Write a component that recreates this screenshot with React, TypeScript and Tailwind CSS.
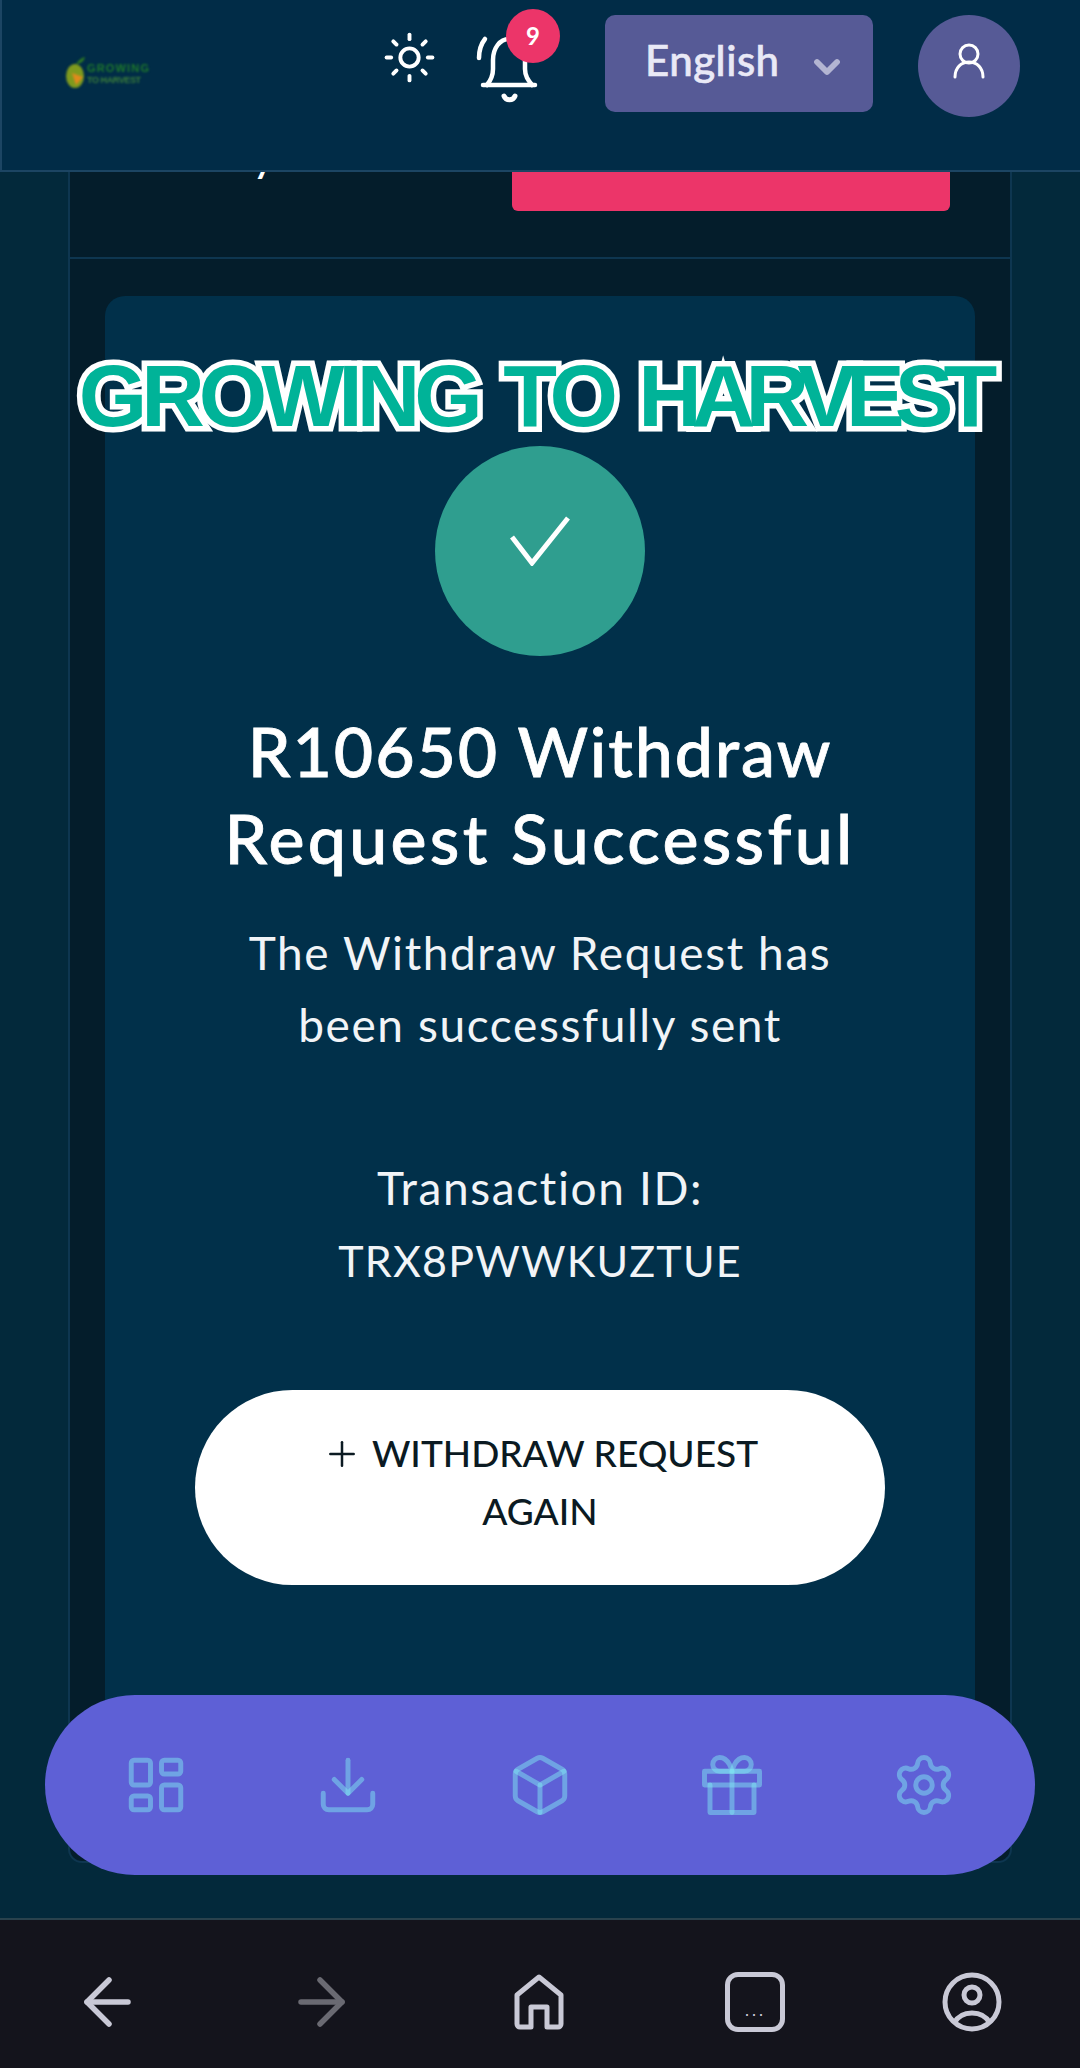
import React from 'react';
import { Sun, ChevronDown, Plus, LayoutDashboard, Download, Box, Settings } from 'lucide-react';

const font = "font-['Lato','Open_Sans',sans-serif]";

const GiftIcon = ({ size, strokeWidth, stroke, strokeOpacity }: { size: number; strokeWidth: number; stroke: string; strokeOpacity: number }) => (
  <svg viewBox="0 0 24 24" width={size} height={size} fill="none" stroke={stroke} strokeWidth={strokeWidth} strokeOpacity={strokeOpacity} strokeLinecap="round" strokeLinejoin="round">
    <path d="M20 12v10H4V12" />
    <rect x="2" y="7" width="20" height="5" />
    <path d="M12 22V7" />
    <path d="M12 7H7.5a2.5 2.5 0 0 1 0-5C11 2 12 7 12 7z" />
    <path d="M12 7h4.5a2.5 2.5 0 0 0 0-5C13 2 12 7 12 7z" />
  </svg>
);

const navIcons = [LayoutDashboard, Download, Box, GiftIcon, Settings];

const BellIcon = () => (
  <svg viewBox="0 0 70 70" className="w-[70px] h-[70px]" fill="none" stroke="white" strokeWidth="4.5" strokeLinecap="round" strokeLinejoin="round">
    <path d="M10 4C6 9 4 15 4 23" />
    <path d="M12 50c4-5 6-9 6-16v-9c0-12 7-21 16-21s16 9 16 21v9c0 7 3 11 7 16" />
    <path d="M8 50h52" />
    <path d="M29 61c2 5 9 5 11 0" strokeWidth="5" />
  </svg>
);

const Logo = () => (
  <svg viewBox="0 0 86 32" className="w-[86px] h-8 blur-[1px]">
    <ellipse cx="10" cy="19" rx="9" ry="12" fill="#7f9a1e" />
    <path d="M7 16l11 4-7 8Z" fill="#e08a1c" />
    <path d="M11 7c2-3 5-6 9-7-1 4-4 7-9 7Z" fill="#2f7a22" />
    <text x="22" y="15" fontSize="11" fontWeight="700" fill="#1f7a2a" fontFamily="Liberation Sans" textLength="62">GROWING</text>
    <text x="22" y="26" fontSize="9" fontWeight="700" fill="#3c7f3a" fontFamily="Liberation Sans" textLength="54">TO HARVEST</text>
  </svg>
);

const UserIcon = () => (
  <svg viewBox="0 0 34 36" className="w-[34px] h-9 -mt-[10px]" fill="none" stroke="white" strokeWidth="3" strokeLinecap="round">
    <circle cx="17" cy="11" r="9" />
    <path d="M3 34c0-9 6-15 14-15s14 6 14 15" />
  </svg>
);

const CheckIcon = () => (
  <svg viewBox="0 0 60 50" className="w-[60px] h-[50px] -mt-5" fill="none" stroke="white" strokeWidth="5">
    <path d="M2 21 22 47 58 2" />
  </svg>
);

const BackArrow = ({ color, flip }: { color: string; flip?: boolean }) => (
  <svg viewBox="0 0 50 50" className={flip ? 'w-[50px] h-[50px] -scale-x-100' : 'w-[50px] h-[50px]'} fill="none" stroke={color} strokeWidth="5.5" strokeLinecap="round" strokeLinejoin="round">
    <path d="M46 25H5" />
    <path d="M27 3 5 25l22 22" />
  </svg>
);

const HomeIcon = () => (
  <svg viewBox="0 0 50 56" className="w-[50px] h-14" fill="none" stroke="#c9c9d6" strokeWidth="5" strokeLinejoin="round">
    <path d="M25 3 47 21v29a3 3 0 0 1-3 3H33V33H17v20H6a3 3 0 0 1-3-3V21Z" />
  </svg>
);

const TabsIcon = () => (
  <div className="w-[60px] h-[60px] rounded-[13px] border-[5px] border-[#c9c9d6] flex items-end justify-center pb-[8px]">
    <span className="text-[#c9c9d6] text-[18px] leading-[18px] tracking-[2px] font-['Liberation_Sans',sans-serif]">...</span>
  </div>
);

const ProfileIcon = () => (
  <svg viewBox="0 0 60 60" className="w-[60px] h-[60px]" fill="none" stroke="#c9c9d6" strokeWidth="5">
    <circle cx="30" cy="30" r="27" />
    <circle cx="30" cy="23" r="8" />
    <path d="M12 51c4-7 11-10 18-10s14 3 18 10" />
  </svg>
);

export default function App() {
  return (
    <div className={`relative h-[2068px] w-[1080px] overflow-hidden flex flex-col bg-[#03293b] ${font}`}>
      {/* top bar */}
      <header className="h-[172px] shrink-0 bg-[#012c47] border-l-2 border-b-2 border-[#1c4563] flex items-start pt-[15px] pl-[63px] text-white">
        <div className="mt-[42px]"><Logo /></div>
        <div className="ml-[231px] mt-[15px]"><Sun size={55} strokeWidth={1.7} /></div>
        <div className="relative ml-[38px] mt-[20px]">
          <BellIcon />
          <span className="absolute -top-[26px] left-[31px] w-[54px] h-[54px] rounded-full bg-[#ec3569] flex items-center justify-center text-[24px] font-bold">9</span>
        </div>
        <div className="ml-[60px] h-[97px] w-[268px] rounded-[10px] bg-[#565a96] flex items-center pl-[40px] pr-[26px] justify-between">
          <span className="text-[42px] font-medium text-[#e9e9f6] tracking-[0.5px] -mt-[6px] [-webkit-text-stroke:0.6px_#e9e9f6]">English</span>
          <ChevronDown size={40} strokeWidth={3.5} className="text-[#b3b5d2] mt-[6px]" />
        </div>
        <div className="ml-[45px] w-[102px] h-[102px] rounded-full bg-[#565a96] flex items-center justify-center">
          <UserIcon />
        </div>
      </header>

      {/* scrolled page */}
      <main className="flex-1 overflow-hidden px-[68px]">
        <div className="h-[1691px] overflow-hidden rounded-b-[14px] border-x-2 border-b-2 border-[#0e3650] bg-[#041d2b]">
          <div className="h-[87px] border-b-2 border-[#0e3650] flex items-start overflow-hidden pl-[59px] pr-[60px]">
            <span className="text-[48px] leading-[40px] -mt-[39px] text-white flex-1">Money</span>
            <div className="w-[438px] h-[39px] rounded-b-[6px] bg-[#ec3569]" />
          </div>
          <div className="mx-[35px] mt-[37px] h-[1500px] rounded-[20px] bg-[#01304a] flex flex-col items-center pt-[150px] text-white">
            <div className="w-[210px] h-[210px] rounded-full bg-[#2f9e8f] flex items-center justify-center">
              <CheckIcon />
            </div>
            <h1 className="mt-[51px] text-[68px] leading-[87px] font-medium text-center tracking-[1.9px] [-webkit-text-stroke:0.8px_white]">
              R10650 Withdraw
              <br />
              <span className="tracking-[3.3px]">Request Successful</span>
            </h1>
            <p className="mt-[36px] text-[46px] leading-[72px] text-center tracking-[1.6px] text-[#f1f4f7]">
              The Withdraw Request has
              <br />
              been successfully sent
            </p>
            <p className="mt-[91px] text-[46px] leading-[72px] text-center tracking-[1.6px] text-[#f1f4f7]">
              Transaction ID:
              <br />
              <span className="text-[43px] tracking-[1.2px]">TRX8PWWKUZTUE</span>
            </p>
            <button className="mt-[93px] w-[690px] h-[195px] rounded-full bg-white text-[#0b1a22] text-[37px] leading-[58px] font-medium px-[120px] pb-[12px] text-center">
              <Plus size={40} strokeWidth={1.5} className="inline-block mr-[10px] -mt-[6px]" />
              WITHDRAW REQUEST AGAIN
            </button>
          </div>
        </div>
      </main>

      {/* browser bar */}
      <footer className="h-[150px] shrink-0 bg-[#14141c] border-t-2 border-[#29424d] grid grid-cols-[214px_216px_217px_216px_217px] items-center pt-[16px]">
        <div className="flex justify-center"><BackArrow color="#c9c9d6" /></div>
        <div className="flex justify-center"><BackArrow color="#6a6a72" flip /></div>
        <div className="flex justify-center"><HomeIcon /></div>
        <div className="flex justify-center"><TabsIcon /></div>
        <div className="flex justify-center"><ProfileIcon /></div>
      </footer>

      {/* floating nav */}
      <nav className="absolute left-[45px] top-[1695px] w-[990px] h-[180px] rounded-[90px] bg-[#5e60d6] flex items-center justify-between px-[78px]">
        {navIcons.map((Icon, i) => (
          <Icon key={i} size={66} strokeWidth={1.8} stroke="#7fe6f2" strokeOpacity={0.5} />
        ))}
      </nav>

      {/* video caption */}
      <div className="absolute left-0 right-[14px] top-[350px] text-center font-['Liberation_Sans',sans-serif] font-bold text-[88px] leading-[92px] tracking-[-6px] [word-spacing:8px] text-[#00b398] [-webkit-text-stroke:11px_white] [paint-order:stroke_fill] whitespace-nowrap">
        GROWING TO <span className="tracking-[-10px]">HARVEST</span>
      </div>
    </div>
  );
}
